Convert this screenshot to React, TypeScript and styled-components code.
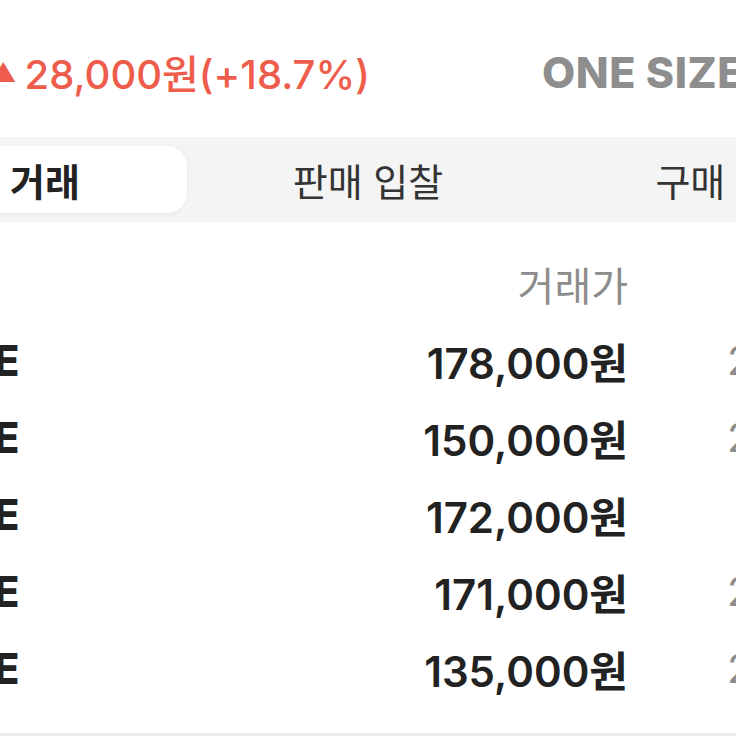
import React from 'react';
import styled, { createGlobalStyle } from 'styled-components';

const GlobalStyle = createGlobalStyle`
  html, body {
    margin: 0;
    padding: 0;
    background: #ffffff;
  }
  body {
    font-family: Inter, "Noto Sans CJK KR", "Noto Sans", sans-serif;
    -webkit-font-smoothing: antialiased;
  }
`;

const Viewport = styled.div`
  width: 736px;
  height: 736px;
  overflow: hidden;
  background: #ffffff;
`;

// the screenshot is a zoomed crop, so the real page is wider than the window
const Page = styled.div`
  width: 1104px;
  margin-left: -184px;
`;

const PriceRow = styled.div`
  display: grid;
  grid-template-columns: 726px 1fr;
  align-items: center;
  height: 100px;
  margin-top: 22px;
`;

const Change = styled.div`
  display: flex;
  align-items: center;
  padding-left: 174px;
  color: #ee5c4b;
  font-size: 40px;
  font-weight: 500;
  white-space: nowrap;
`;

const Arrow = styled.span`
  font-size: 26px;
  margin-right: 8px;
`;

const SizeLabel = styled.div`
  color: #8e8e8e;
  font-size: 43px;
  font-weight: 800;
  letter-spacing: 0.5px;
  white-space: nowrap;
`;

const TabBar = styled.div`
  display: flex;
  height: 85px;
  box-sizing: border-box;
  padding: 9px 8px;
  margin-top: 15px;
  background: #f4f4f4;
`;

const Tab = styled.div<{ $active?: boolean }>`
  flex: 1;
  display: flex;
  align-items: center;
  justify-content: center;
  border-radius: 20px;
  font-size: 38px;
  font-weight: ${p => (p.$active ? 600 : 400)};
  color: ${p => (p.$active ? '#222222' : '#333333')};
  background: ${p => (p.$active ? '#ffffff' : 'transparent')};
  box-shadow: ${p => (p.$active ? '0 1px 4px rgba(0, 0, 0, 0.06)' : 'none')};
`;

const Table = styled.div`
  margin-top: 23px;
  padding: 0 9px 26px 10px;
`;

const Row = styled.div`
  display: grid;
  grid-template-columns: 400px 402px 1fr;
  align-items: center;
  height: 77px;
`;

const SizeCell = styled.div<{ $head?: boolean }>`
  white-space: nowrap;
  font-size: ${p => (p.$head ? '40px' : '42px')};
  font-weight: ${p => (p.$head ? 400 : 800)};
  color: ${p => (p.$head ? '#8c8c8c' : '#222222')};
`;

const PriceCell = styled.div<{ $head?: boolean }>`
  text-align: right;
  white-space: nowrap;
  font-size: ${p => (p.$head ? '40px' : '42px')};
  font-weight: ${p => (p.$head ? 400 : 600)};
  color: ${p => (p.$head ? '#8c8c8c' : '#222222')};
`;

const DateCell = styled.div<{ $head?: boolean }>`
  text-align: right;
  white-space: nowrap;
  font-size: 40px;
  font-weight: 400;
  font-variant-numeric: tabular-nums;
  color: #8c8c8c;
`;

const Divider = styled.div`
  height: 12px;
  background: #ececec;
`;

const trades = [
  { size: 'ONE SIZE', price: '178,000원', date: '24/11/17' },
  { size: 'ONE SIZE', price: '150,000원', date: '24/10/24' },
  { size: 'ONE SIZE', price: '172,000원', date: '24/9/17' },
  { size: 'ONE SIZE', price: '171,000원', date: '24/11/13' },
  { size: 'ONE SIZE', price: '135,000원', date: '24/08/02' },
];

export default function App() {
  return (
    <Viewport>
      <GlobalStyle />
      <Page>
        <PriceRow>
          <Change>
            <Arrow>▲</Arrow>
            28,000원(+18.7%)
          </Change>
          <SizeLabel>ONE SIZE</SizeLabel>
        </PriceRow>

        <TabBar>
          <Tab $active>체결 거래</Tab>
          <Tab>판매 입찰</Tab>
          <Tab>구매 입찰</Tab>
        </TabBar>

        <Table>
          <Row>
            <SizeCell $head>사이즈</SizeCell>
            <PriceCell $head>거래가</PriceCell>
            <DateCell $head>거래일</DateCell>
          </Row>
          {trades.map((t, i) => (
            <Row key={i}>
              <SizeCell>{t.size}</SizeCell>
              <PriceCell>{t.price}</PriceCell>
              <DateCell>{t.date}</DateCell>
            </Row>
          ))}
        </Table>
        <Divider />
      </Page>
    </Viewport>
  );
}
